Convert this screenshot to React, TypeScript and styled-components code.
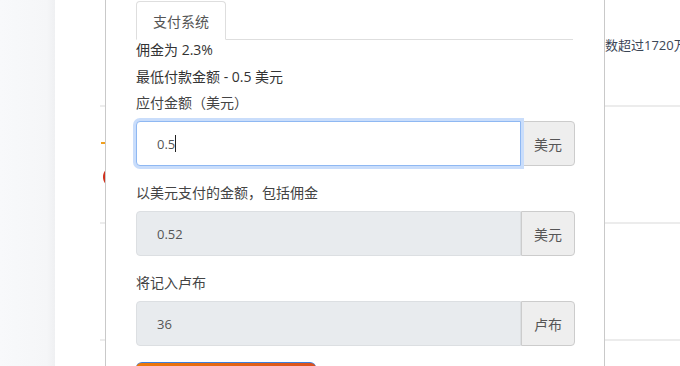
import React from 'react'
import styled, { createGlobalStyle } from 'styled-components'

const GlobalStyle = createGlobalStyle`
    html, body {
        margin: 0;
        padding: 0;
        background: #ffffff;
        font-family: "Open Sans", "Noto Sans CJK SC", sans-serif;
    }
`

const Page = styled.div`
    position: relative;
    display: flex;
    width: 680px;
    height: 366px;
    overflow: hidden;
`
const Gutter = styled.div`
    width: 55px;
    flex: none;
    background: linear-gradient(to right, #f8f9fb, #f5f6f8 85%, #eff0f2);
`
const Main = styled.div`
    flex: 1;
    background: #fff;
    padding-left: 45px;
`
const Rows = styled.div`
    margin-top: -10px;
    width: 700px;
`
const Row = styled.div`
    display: grid;
    grid-template-columns: 479px 1fr;
    height: 115px;
    border-bottom: 2px solid #ececec;
`
const Logo = styled.div`
    padding-top: 28px;
`
const Stats = styled.div`
    padding-top: 45px;
    font-size: 13px;
    line-height: 20px;
    color: #3b4656;
    white-space: nowrap;
`

const Modal = styled.div`
    position: absolute;
    left: 105px;
    top: 0;
    width: 500px;
    height: 400px;
    box-sizing: border-box;
    background: #fff;
    border-left: 1px solid #c9c9c9;
    border-right: 1px solid #c9c9c9;
    padding: 1px 29px 0 30px;
    font-size: 14px;
    color: #333;
`
const Tabs = styled.div`
    display: flex;
    width: 437px;
    border-bottom: 1px solid #dedede;
`
const Tab = styled.div`
    height: 37px;
    padding: 0 16px;
    display: flex;
    align-items: center;
    border: 1px solid #dedede;
    border-bottom-color: #fff;
    border-radius: 4px 4px 0 0;
    margin-bottom: -1px;
    color: #555;
`
const Notes = styled.div`
    display: flex;
    flex-direction: column;
    gap: 7px;
    margin-bottom: 6px;
`
const Note = styled.p`
    margin: 0;
    line-height: 20px;
`
const Label = styled.div`
    line-height: 20px;
    margin-bottom: 8px;
    color: #444;
`
const Group = styled.div`
    display: flex;
    height: 45px;
    margin-bottom: 17px;
`
const Field = styled.div<{ $focused?: boolean; $disabled?: boolean }>`
    flex: 1;
    display: flex;
    align-items: center;
    box-sizing: border-box;
    padding-left: 20px;
    border: 1px solid ${p => (p.$focused ? '#8fb8f2' : '#dcdfe2')};
    border-radius: 4px 0 0 4px;
    background: ${p => (p.$disabled ? '#e8ebee' : '#fff')};
    box-shadow: ${p => (p.$focused ? '0 0 0 3px #c9ddfb' : 'none')};
    color: #555;
    font-size: 13px;
    position: relative;
    z-index: 1;
`
const Caret = styled.span`
    display: inline-block;
    width: 1px;
    height: 17px;
    background: #222;
`
const Addon = styled.div`
    width: 54px;
    flex: none;
    box-sizing: border-box;
    display: flex;
    align-items: center;
    justify-content: center;
    border: 1px solid #cccccc;
    border-radius: 0 4px 4px 0;
    background: #eeeeee;
    color: #555;
`
const Submit = styled.button`
    margin-top: -1px;
    width: 180px;
    height: 34px;
    border: none;
    border-top: 1px solid #3b7fdc;
    border-radius: 6px;
    background: linear-gradient(to right, #ec790a, #d9511f);
    color: #fff;
    font: inherit;
`

const PayForm = () => (
    <Modal>
        <Tabs>
            <Tab>支付系统</Tab>
        </Tabs>
        <Notes>
            <Note>佣金为 2.3%</Note>
            <Note>最低付款金额 - 0.5 美元</Note>
        </Notes>
        <Label>应付金额（美元）</Label>
        <Group>
            <Field $focused>
                0.5<Caret />
            </Field>
            <Addon>美元</Addon>
        </Group>
        <Label>以美元支付的金额，包括佣金</Label>
        <Group>
            <Field $disabled>0.52</Field>
            <Addon>美元</Addon>
        </Group>
        <Label>将记入卢布</Label>
        <Group>
            <Field $disabled>36</Field>
            <Addon>卢布</Addon>
        </Group>
        <Submit>支付</Submit>
    </Modal>
)

export default function App() {
    return (
        <Page>
            <GlobalStyle />
            <Gutter />
            <Main>
                <Rows>
                    <Row>
                        <div />
                        <Stats>用户数超过1720万</Stats>
                    </Row>
                    <Row>
                        <Logo>
                            <svg width="40" height="60" viewBox="0 0 40 60">
                                <path d="M1 8 L10 8" stroke="#f0a020" strokeWidth="2" />
                                <circle cx="14" cy="42" r="11" fill="#d0301c" />
                            </svg>
                        </Logo>
                        <div />
                    </Row>
                    <Row>
                        <div />
                        <div />
                    </Row>
                </Rows>
            </Main>
            <PayForm />
        </Page>
    )
}
